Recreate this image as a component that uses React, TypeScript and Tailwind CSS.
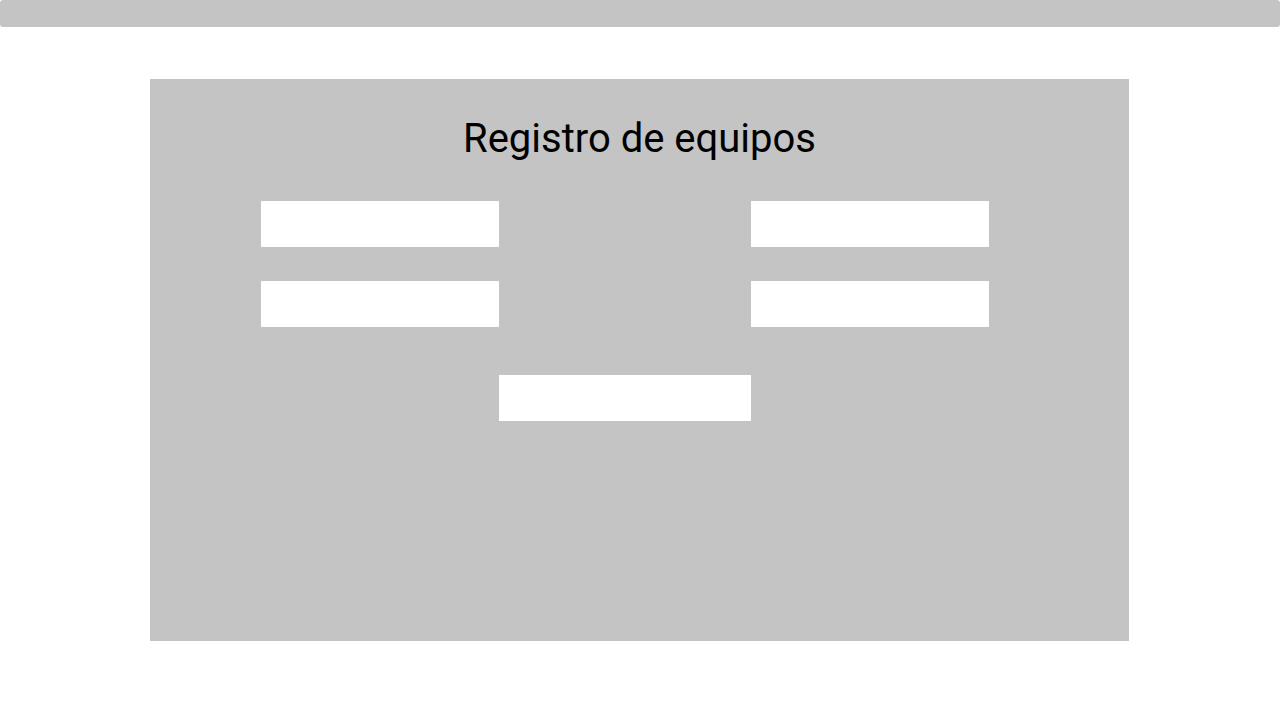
export default function App() {
  return (
    <div className="w-[1280px] h-[720px] bg-white" style={{ fontFamily: "Roboto, 'Noto Sans', sans-serif" }}>
      <div className="h-[27px] w-full rounded-[3px] bg-[#c4c4c4]" />
      <div className="ml-[150px] mt-[52px] h-[562px] w-[979px] bg-[#c4c4c4] pt-[36px]">
        <h1 className="text-center text-[40px] leading-[47px] font-normal text-black">Registro de equipos</h1>
        <div className="ml-[111px] mt-[39px] flex w-[728px] flex-col">
          <div className="flex justify-between">
            <input className="h-[46px] w-[238px] bg-white outline-none" />
            <input className="h-[46px] w-[238px] bg-white outline-none" />
          </div>
          <div className="mt-[34px] flex justify-between">
            <input className="h-[46px] w-[238px] bg-white outline-none" />
            <input className="h-[46px] w-[238px] bg-white outline-none" />
          </div>
          <div className="mt-[48px] flex">
            <input className="ml-[238px] h-[46px] w-[252px] bg-white outline-none" />
          </div>
        </div>
      </div>
    </div>
  );
}
